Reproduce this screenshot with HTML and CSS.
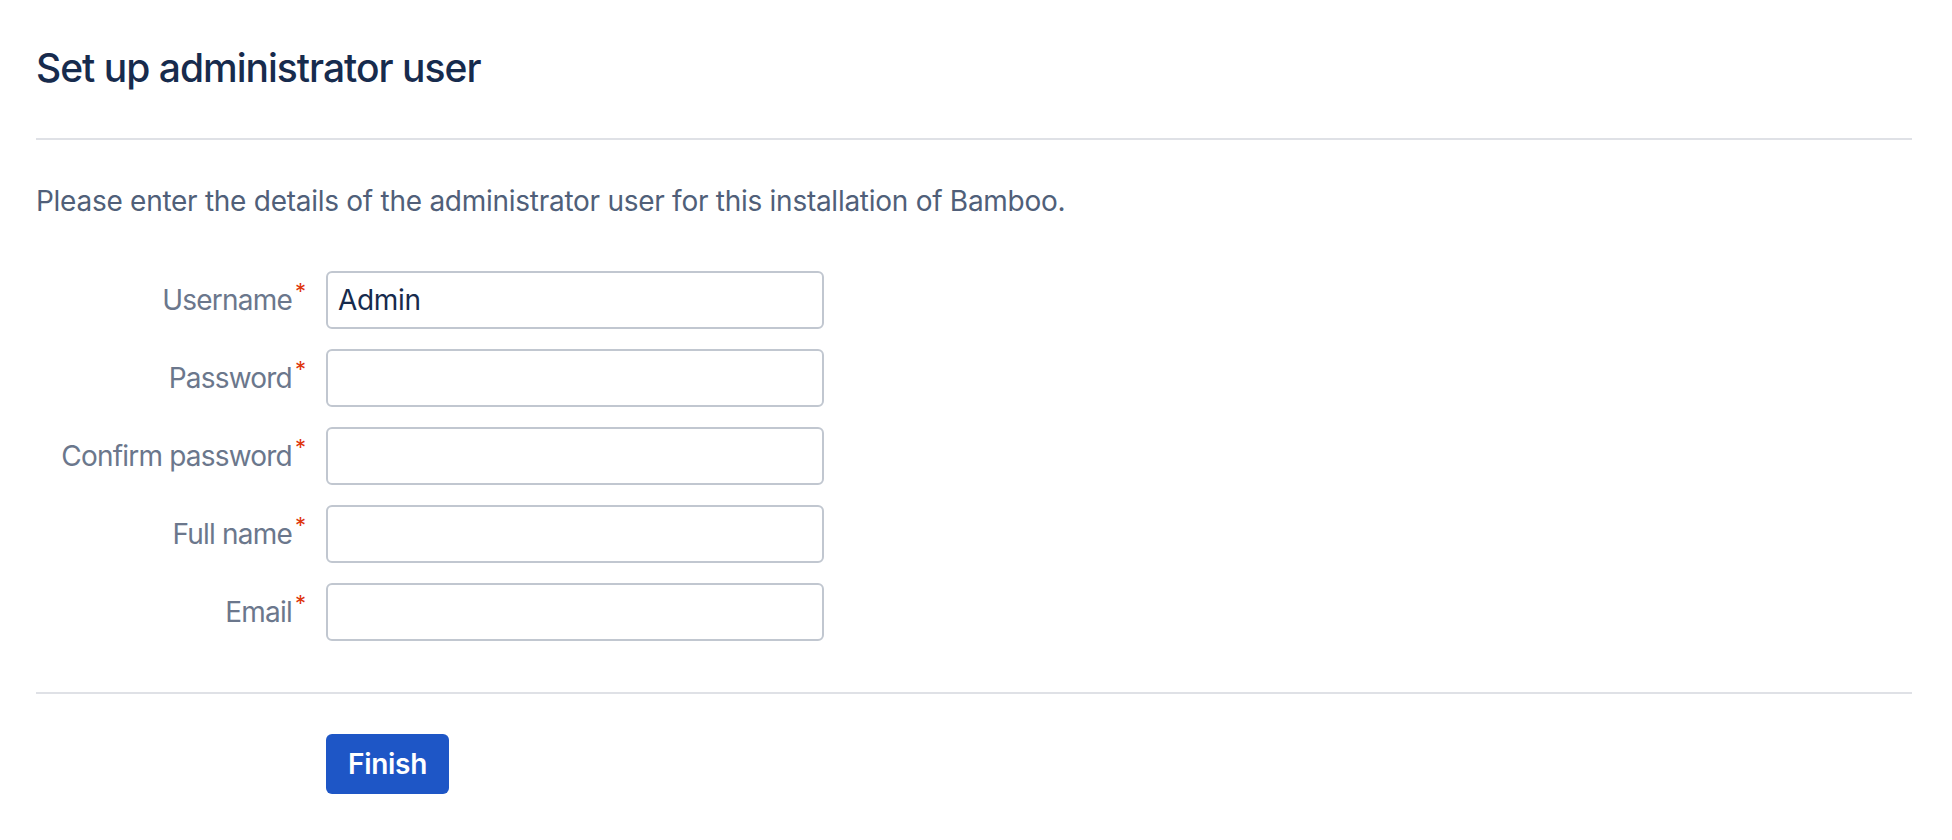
FILE: index.html
```html
<!DOCTYPE html>
<html lang="en">
<head>
<meta charset="utf-8">
<title>Set up administrator user</title>
<link rel="stylesheet" href="styles.css">
</head>
<body>
<main class="page">
  <h1 class="title">Set up administrator user</h1>
  <hr class="rule rule-top">
  <p class="intro">Please enter the details of the administrator user for this installation of Bamboo.</p>
  <form class="form">
    <div class="row">
      <label class="label" for="username">Username<span class="req">*</span></label>
      <input class="field" id="username" type="text" value="Admin">
    </div>
    <div class="row">
      <label class="label" for="password">Password<span class="req">*</span></label>
      <input class="field" id="password" type="password">
    </div>
    <div class="row">
      <label class="label" for="confirm">Confirm password<span class="req">*</span></label>
      <input class="field" id="confirm" type="password">
    </div>
    <div class="row">
      <label class="label" for="fullname">Full name<span class="req">*</span></label>
      <input class="field" id="fullname" type="text">
    </div>
    <div class="row">
      <label class="label" for="email">Email<span class="req">*</span></label>
      <input class="field" id="email" type="text">
    </div>
    <hr class="rule rule-bottom">
    <div class="actions">
      <button class="btn" type="button">Finish</button>
    </div>
  </form>
</main>
</body>
</html>
```
FILE: styles.css
```css
html, body {
  margin: 0;
  padding: 0;
  background: #ffffff;
}
body {
  font-family: Inter, "Noto Sans", "Liberation Sans", sans-serif;
  color: #172b4d;
}
.page {
  padding: 44px 40px 0 36px;
}
.title {
  margin: 0;
  font-size: 39px;
  line-height: 48px;
  font-weight: 500;
  color: #172b4d;
  letter-spacing: -1px;
}
.rule {
  border: 0;
  border-top: 2px solid #dfe1e6;
  margin: 0;
  height: 0;
}
.rule-top {
  margin-top: 46px;
}
.intro {
  margin: 41px 0 0;
  font-size: 28px;
  line-height: 40px;
  color: #505f79;
  letter-spacing: -0.27px;
}
.form {
  margin-top: 50px;
  display: flex;
  flex-direction: column;
  gap: 20px;
}
.row {
  display: grid;
  grid-template-columns: 290px 498px;
  align-items: center;
  height: 58px;
}
.label {
  text-align: right;
  padding-right: 20px;
  font-size: 28px;
  line-height: 40px;
  color: #6b778c;
  letter-spacing: -0.8px;
}
.req {
  color: #de350b;
  font-size: 22px;
  line-height: 1;
  vertical-align: top;
  margin-left: 3px;
  letter-spacing: 0;
}
.field {
  box-sizing: border-box;
  width: 498px;
  height: 58px;
  margin: 0;
  border: 2px solid #c1c7d0;
  border-radius: 6px;
  padding: 0 10px;
  font-family: Inter, "Noto Sans", "Liberation Sans", sans-serif;
  font-size: 28px;
  letter-spacing: -0.3px;
  color: #172b4d;
  background: #ffffff;
  outline: none;
}
.rule-bottom {
  margin-top: 31px;
}
.actions {
  margin-top: 20px;
  padding-left: 290px;
}
.btn {
  height: 60px;
  padding: 0 22px;
  border: 0;
  border-radius: 6px;
  background: #1e56c6;
  color: #ffffff;
  font-family: Inter, "Noto Sans", "Liberation Sans", sans-serif;
  font-size: 28px;
  font-weight: 600;
  letter-spacing: -0.3px;
  cursor: pointer;
}
```
